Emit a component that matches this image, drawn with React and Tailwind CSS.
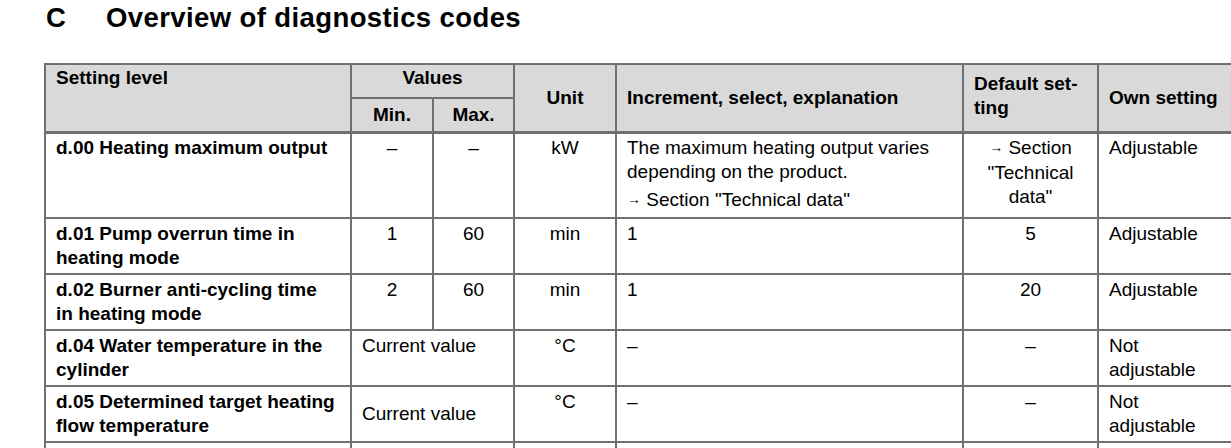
const rows = [
  {
    name: ['d.00 Heating maximum output'],
    min: '–',
    max: '–',
    unit: 'kW',
    inc: null,
    def: ['→ Section', '"Technical', 'data"'],
    own: ['Adjustable'],
    h: 'h-[86px]',
    first: true,
  },
  {
    name: ['d.01 Pump overrun time in', 'heating mode'],
    min: '1',
    max: '60',
    unit: 'min',
    inc: '1',
    def: ['5'],
    own: ['Adjustable'],
    h: 'h-[56px]',
  },
  {
    name: ['d.02 Burner anti-cycling time', 'in heating mode'],
    min: '2',
    max: '60',
    unit: 'min',
    inc: '1',
    def: ['20'],
    own: ['Adjustable'],
    h: 'h-[56px]',
  },
  {
    name: ['d.04 Water temperature in the', 'cylinder'],
    current: true,
    unit: '°C',
    inc: '–',
    def: ['–'],
    own: ['Not', 'adjustable'],
    h: 'h-[56px]',
  },
  {
    name: ['d.05 Determined target heating', 'flow temperature'],
    current: true,
    middle: true,
    unit: '°C',
    inc: '–',
    def: ['–'],
    own: ['Not', 'adjustable'],
    h: 'h-[56px]',
  },
];

const lines = (arr) =>
  arr.map((t, i) => (
    <span key={i}>
      {i > 0 && <br />}
      {t}
    </span>
  ));

const Arrow = () => (
  <span className="relative -top-[2px] text-[14px]">→</span>
);

export default function App() {
  const border = 'border-2 border-[#707070] px-[10px]';
  const head = 'border-2 border-[#707070] px-[10px] font-bold';

  return (
    <div
      className="w-[1231px] h-[448px] overflow-hidden bg-white text-black"
      style={{ fontFamily: '"Liberation Sans", Arial, sans-serif' }}
    >
      <h1 className="flex pl-[46px] pt-[1.5px] text-[27.5px] leading-[32px] tracking-[0.4px] font-bold">
        <span className="w-[60px]">C</span>
        <span>Overview of diagnostics codes</span>
      </h1>

      <table className="mt-[29.5px] ml-[44px] table-fixed border-collapse text-[19px] leading-[24px] w-[1190px]">
        <colgroup>
          <col className="w-[306px]" />
          <col className="w-[82px]" />
          <col className="w-[81px]" />
          <col className="w-[102px]" />
          <col className="w-[347px]" />
          <col className="w-[135px]" />
          <col className="w-[137px]" />
        </colgroup>
        <thead className="bg-[#d9d9d9]">
          <tr className="h-[34px]">
            <th rowSpan={2} className={`${head} text-left align-top pt-[1px] border-b-[3px]`}>
              Setting level
            </th>
            <th colSpan={2} className={`${head} text-center align-top pt-[1px]`}>
              Values
            </th>
            <th rowSpan={2} className={`${head} text-center align-middle border-b-[3px]`}>
              Unit
            </th>
            <th rowSpan={2} className={`${head} text-left align-middle border-b-[3px]`}>
              Increment, select, explanation
            </th>
            <th rowSpan={2} className={`${head} text-left align-middle pb-[4px] border-b-[3px]`}>
              Default set-
              <br />
              ting
            </th>
            <th rowSpan={2} className={`${head} text-left align-middle border-b-[3px]`}>
              Own setting
            </th>
          </tr>
          <tr className="h-[34px]">
            <th className={`${head} text-center align-middle border-b-[3px]`}>Min.</th>
            <th className={`${head} text-center align-middle border-b-[3px]`}>Max.</th>
          </tr>
        </thead>
        <tbody>
          {rows.map((r, i) => {
            const cell = `${border} align-top ${r.first ? 'pt-[2px]' : 'pt-[3px]'}`;
            return (
              <tr key={i} className={r.h}>
                <td className={`${cell} font-bold`}>{lines(r.name)}</td>
                {r.current ? (
                  <td
                    colSpan={2}
                    className={r.middle ? `${border} align-middle` : cell}
                  >
                    Current value
                  </td>
                ) : (
                  <>
                    <td className={`${cell} text-center`}>{r.min}</td>
                    <td className={`${cell} text-center`}>{r.max}</td>
                  </>
                )}
                <td className={`${cell} text-center`}>{r.unit}</td>
                <td className={cell}>
                  {r.inc === null ? (
                    <>
                      The maximum heating output varies
                      <br />
                      depending on the product.
                      <div className="mt-[4px]">
                        <Arrow /> Section "Technical data"
                      </div>
                    </>
                  ) : (
                    r.inc
                  )}
                </td>
                <td className={`${cell} text-center`}>
                  {r.def.map((t, j) => (
                    <span key={j}>
                      {j > 0 && <br />}
                      {t.startsWith('→') ? (
                        <>
                          <Arrow />
                          {t.slice(1)}
                        </>
                      ) : (
                        t
                      )}
                    </span>
                  ))}
                </td>
                <td className={cell}>{lines(r.own)}</td>
              </tr>
            );
          })}
          <tr className="h-[20px]">
            <td className={border}></td>
            <td colSpan={2} className={border}></td>
            <td className={border}></td>
            <td className={border}></td>
            <td className={border}></td>
            <td className={border}></td>
          </tr>
        </tbody>
      </table>
    </div>
  );
}
